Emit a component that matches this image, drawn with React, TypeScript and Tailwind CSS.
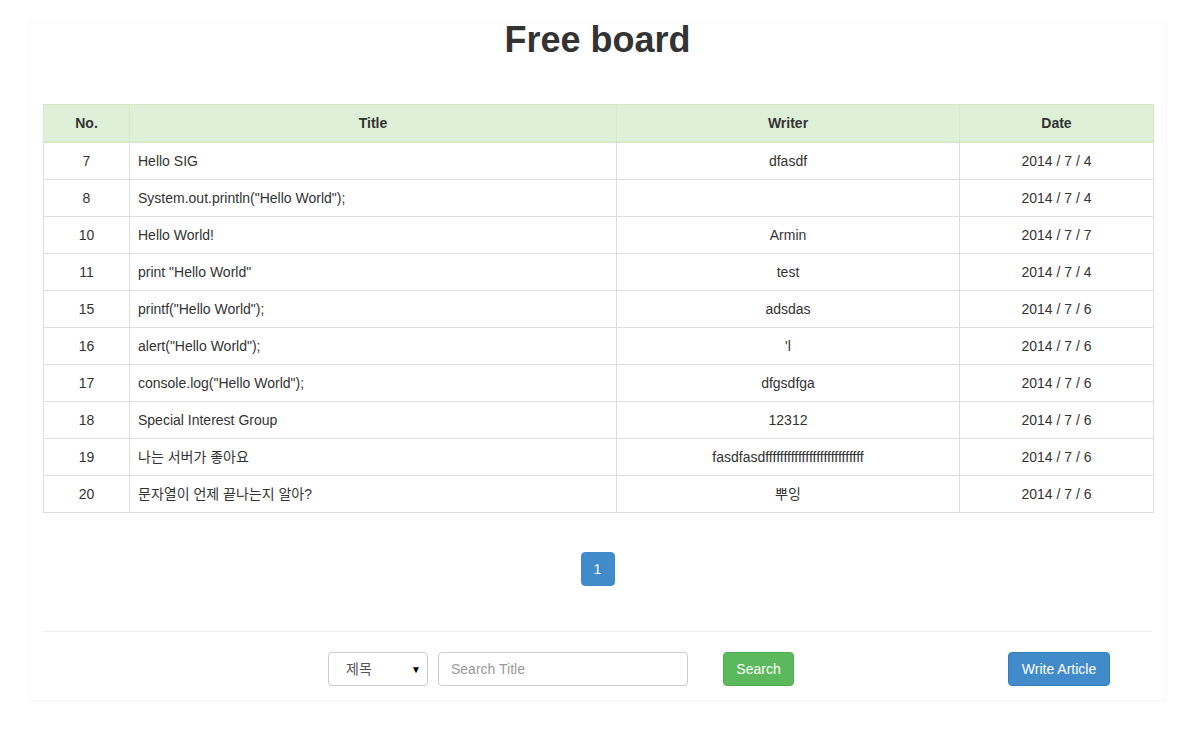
const posts = [
  { no: 7, title: "Hello SIG", writer: "dfasdf", date: "2014 / 7 / 4" },
  { no: 8, title: 'System.out.println("Hello World");', writer: "", date: "2014 / 7 / 4" },
  { no: 10, title: "Hello World!", writer: "Armin", date: "2014 / 7 / 7" },
  { no: 11, title: 'print "Hello World"', writer: "test", date: "2014 / 7 / 4" },
  { no: 15, title: 'printf("Hello World");', writer: "adsdas", date: "2014 / 7 / 6" },
  { no: 16, title: 'alert("Hello World");', writer: "'l", date: "2014 / 7 / 6" },
  { no: 17, title: 'console.log("Hello World");', writer: "dfgsdfga", date: "2014 / 7 / 6" },
  { no: 18, title: "Special Interest Group", writer: "12312", date: "2014 / 7 / 6" },
  { no: 19, title: "나는 서버가 좋아요", writer: "fasdfasdfffffffffffffffffffffffffff", date: "2014 / 7 / 6" },
  { no: 20, title: "문자열이 언제 끝나는지 알아?", writer: "뿌잉", date: "2014 / 7 / 6" },
];

export default function App() {
  const cell = "border border-[#dddddd] px-2 py-2 leading-5";

  return (
    <div className="min-h-[736px] bg-white pt-[22px] font-['Liberation_Sans','Noto_Sans_CJK_KR',sans-serif] text-[14px] text-[#333333]">
      <div className="mx-[28px] w-[1139px] rounded border border-[#f8f8f8] px-[14px] pb-[14px] shadow-[0_1px_1px_rgba(0,0,0,0.03)]">
        <h1 className="text-center text-[36px] font-bold leading-[34px]">Free board</h1>

        <table className="mt-[47px] w-[1110px] table-fixed border-collapse">
          <colgroup>
            <col className="w-[86px]" />
            <col className="w-[487px]" />
            <col className="w-[343px]" />
            <col className="w-[194px]" />
          </colgroup>
          <thead>
            <tr className="bg-[#dff0d8]">
              <th className="border border-[#d6e9c6] border-b-2 px-2 py-2 text-center font-bold leading-5">No.</th>
              <th className="border border-[#d6e9c6] border-b-2 px-2 py-2 text-center font-bold leading-5">Title</th>
              <th className="border border-[#d6e9c6] border-b-2 px-2 py-2 text-center font-bold leading-5">Writer</th>
              <th className="border border-[#d6e9c6] border-b-2 px-2 py-2 text-center font-bold leading-5">Date</th>
            </tr>
          </thead>
          <tbody>
            {posts.map((p) => (
              <tr key={p.no}>
                <td className={`${cell} text-center`}>{p.no}</td>
                <td className={cell}>{p.title}</td>
                <td className={`${cell} text-center`}>{p.writer}</td>
                <td className={`${cell} text-center`}>{p.date}</td>
              </tr>
            ))}
          </tbody>
        </table>

        <div className="mt-[39px] flex justify-center">
          <span className="flex h-[34px] w-[34px] items-center justify-center rounded border border-[#428bca] bg-[#428bca] text-white">
            1
          </span>
        </div>

        <hr className="mt-[45px] border-t border-[#eeeeee]" />

        <div className="mt-[20px] flex items-center">
          <div className="ml-[285px] flex h-[34px] w-[100px] items-center justify-between rounded border border-[#cccccc] bg-white pl-[17px] pr-[6px] text-[#555555]">
            <span>제목</span>
            <span className="text-[10px] text-black">▼</span>
          </div>
          <div className="ml-[10px] flex h-[34px] w-[250px] items-center rounded border border-[#cccccc] bg-white px-3 text-[#999999]">
            Search Title
          </div>
          <button className="ml-[35px] h-[34px] w-[71px] rounded border border-[#4cae4c] bg-[#5cb85c] text-white">
            Search
          </button>
          <button className="ml-[214px] h-[34px] w-[102px] rounded border border-[#357ebd] bg-[#428bca] text-white">
            Write Article
          </button>
        </div>
      </div>
    </div>
  );
}
